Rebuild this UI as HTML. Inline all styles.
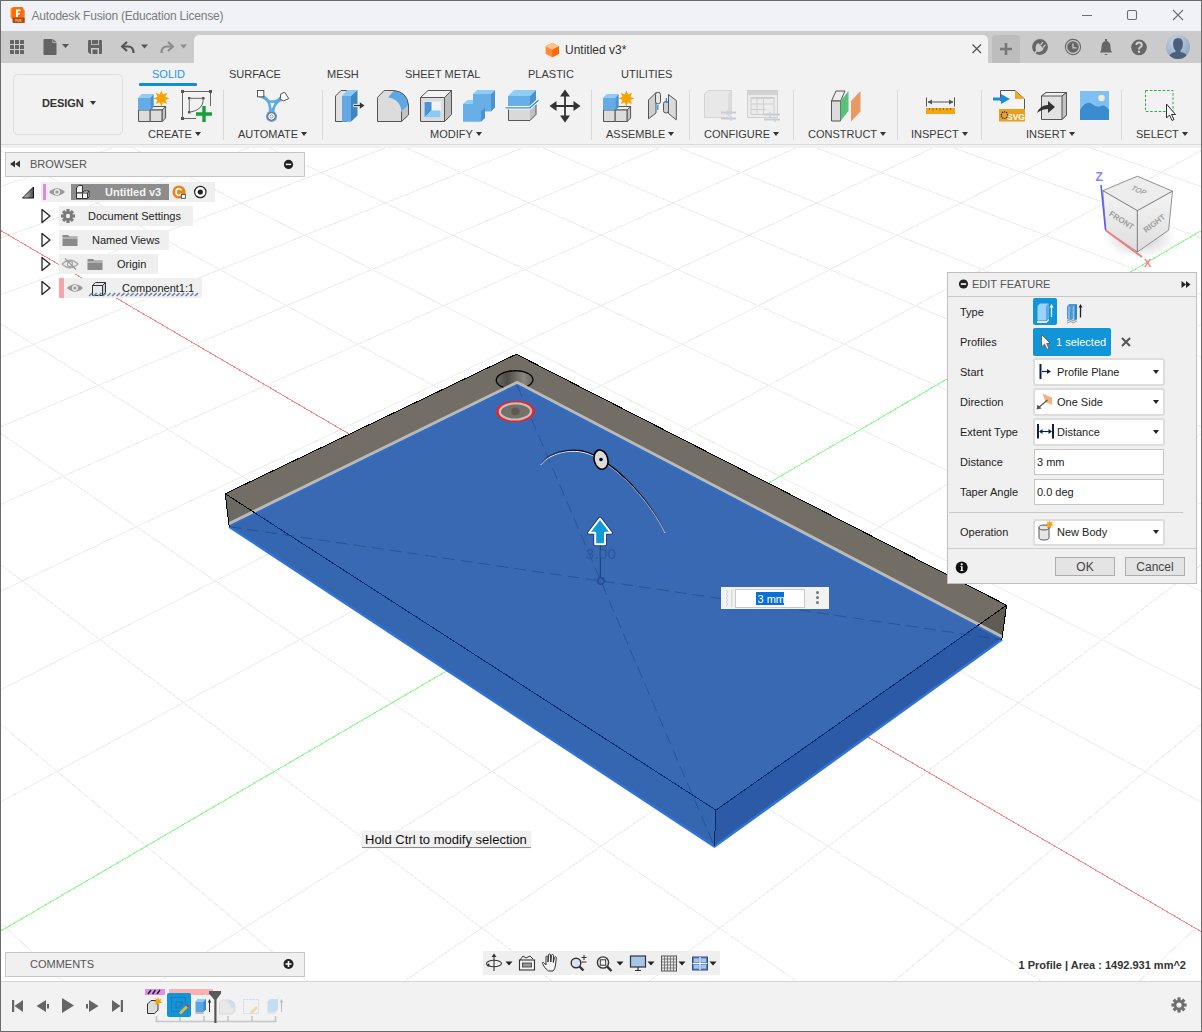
<!DOCTYPE html>
<html><head><meta charset="utf-8">
<style>
*{margin:0;padding:0;box-sizing:border-box}
html,body{width:1202px;height:1032px;overflow:hidden;background:#fff;font-family:"Liberation Sans",sans-serif}
.a{position:absolute}
svg.a{overflow:visible}
.t{position:absolute;white-space:nowrap;line-height:1}
#frame{left:0;top:0;width:1202px;height:1032px;border:1px solid #6b6b6b;z-index:50}
#title{left:0;top:0;width:1202px;height:31px;background:#f0f2f8}
#tabbar{left:0;top:31px;width:1202px;height:32px;background:#cbcbcb}
#doctab{left:194px;top:35px;width:794px;height:28px;background:#f2f2f2;border-radius:5px 5px 0 0}
#plustab{left:992px;top:35px;width:28px;height:28px;background:#bdbdbd;border-radius:4px 4px 0 0}
#ribbon{left:0;top:63px;width:1202px;height:85px;background:#f2f2f2}
#ribline{left:0;top:144px;width:1202px;height:1px;background:#dcdcdc}
.tab{position:absolute;top:68.5px;font-size:11px;color:#3a3a3a;white-space:nowrap;line-height:1}
.grp{position:absolute;top:128.5px;font-size:11px;color:#3a3a3a;white-space:nowrap;line-height:1}
.sep{position:absolute;top:90px;width:1px;height:50px;background:#d9d9d9}
.dd{display:inline-block;width:0;height:0;border-left:3.5px solid transparent;border-right:3.5px solid transparent;border-top:4px solid #333;vertical-align:middle;margin-left:3px;position:relative;top:-1px}
#tl{left:0;top:981px;width:1202px;height:51px;background:#f2f2f2;border-top:1px solid #d4d4d4}
.panelhdr{position:absolute;background:#f0f0f0;border:1px solid #c6c6c6}
.row{position:absolute;height:20px;background:#efefef}
.lbl{position:absolute;font-size:11px;color:#222;white-space:nowrap;line-height:1}
.dlg{left:947px;top:272px;width:250px;height:312px;background:#f0f0f0;border:1px solid #bfbfbf}
.drop{position:absolute;left:1033px;width:131.5px;height:27.5px;background:#fff;border:2px solid #dddddd;border-radius:3px}
.inp{position:absolute;left:1034px;width:130px;height:26px;background:#fff;border:1px solid #c6c6c6}
.btn{position:absolute;height:19px;background:#e4e4e4;border:1px solid #adadad;font-size:12px;color:#333;text-align:center;line-height:17px}
.ddr{position:absolute;width:0;height:0;border-left:3.5px solid transparent;border-right:3.5px solid transparent;border-top:4px solid #222}
</style></head><body>
<div id="title" class="a"></div>
<div id="tabbar" class="a"></div>
<div id="doctab" class="a"></div>
<div id="plustab" class="a"></div>
<div id="ribbon" class="a"></div>
<div id="ribline" class="a"></div>
<!-- ===== title bar ===== -->
<svg class="a" style="left:9px;top:6px" width="17" height="18" viewBox="0 0 17 18">
 <path d="M1.5,3.5 Q1.5,1.5 3.5,1.5 L3.5,13 L1.5,12 Z" fill="#ff8a2a"/>
 <rect x="3" y="1" width="11.5" height="12" rx="1.5" fill="#ff6d00"/>
 <path d="M14.5,3.5 L15.5,4.5 L15.5,17 L14.5,17 Z" fill="#c44d00"/>
 <rect x="3.5" y="11.5" width="12" height="5.5" rx="1" fill="#b4480a"/>
 <path d="M7,3.5 H11.5 V5.2 H8.9 V6.9 H11 V8.5 H8.9 V11 H7 Z" fill="#fff"/>
 <text x="9.5" y="16" font-family="Liberation Sans" font-size="3.2" font-weight="bold" fill="#f3c9a8" text-anchor="middle">FUS</text>
</svg>
<div class="t" style="left:31.5px;top:9.5px;font-size:12px;letter-spacing:-0.2px;color:#7b7b7b">Autodesk Fusion (Education License)</div>
<svg class="a" style="left:1080px;top:8px" width="110" height="15">
 <line x1="2" y1="7.5" x2="12" y2="7.5" stroke="#6e6e6e" stroke-width="1"/>
 <rect x="47.5" y="2.5" width="9" height="9" rx="1.5" fill="none" stroke="#6e6e6e" stroke-width="1.1"/>
 <path d="M93,2 L103,12 M103,2 L93,12" stroke="#6e6e6e" stroke-width="1.1"/>
</svg>

<!-- ===== tab bar ===== -->
<svg class="a" style="left:9px;top:39px" width="16" height="16" viewBox="0 0 16 16">
 <g fill="#646464"><rect x="1" y="1" width="4" height="4" rx=".6"/><rect x="6" y="1" width="4" height="4" rx=".6"/><rect x="11" y="1" width="4" height="4" rx=".6"/>
 <rect x="1" y="6" width="4" height="4" rx=".6"/><rect x="6" y="6" width="4" height="4" rx=".6"/><rect x="11" y="6" width="4" height="4" rx=".6"/>
 <rect x="1" y="11" width="4" height="4" rx=".6"/><rect x="6" y="11" width="4" height="4" rx=".6"/><rect x="11" y="11" width="4" height="4" rx=".6"/></g>
</svg>
<svg class="a" style="left:42px;top:38px" width="30" height="18" viewBox="0 0 30 18">
 <path d="M1.5,2 Q1.5,1 2.5,1 L10.5,1 L14.5,5 L14.5,16 Q14.5,17 13.5,17 L2.5,17 Q1.5,17 1.5,16 Z" fill="#646464"/>
 <path d="M10.5,1 L14.5,5 L10.5,5 Z" fill="#cbcbcb"/><path d="M11.2,1.2 L14.3,4.3 L11.2,4.3Z" fill="#646464"/>
 <path d="M20,6 L27,6 L23.5,10 Z" fill="#555"/>
</svg>
<svg class="a" style="left:87px;top:39px" width="16" height="16" viewBox="0 0 16 16">
 <path d="M1,2 Q1,1 2,1 L14,1 Q15,1 15,2 L15,14 Q15,15 14,15 L3,15 L1,13 Z" fill="#646464"/>
 <rect x="4" y="1" width="8" height="5" fill="#cbcbcb"/><rect x="4.8" y="1" width="6.4" height="4.2" fill="#646464"/>
 <rect x="4" y="9" width="8" height="6" fill="#cbcbcb"/><rect x="5.5" y="10.5" width="5" height="4.5" fill="#646464"/>
</svg>
<svg class="a" style="left:119px;top:38px" width="70" height="18" viewBox="0 0 70 18">
 <path d="M8,4 L3,8.5 L8,13" fill="none" stroke="#555" stroke-width="2.2" stroke-linejoin="round"/>
 <path d="M3.5,8.5 L9,8.5 Q14.5,8.5 14.5,15" fill="none" stroke="#555" stroke-width="2.2"/>
 <path d="M22,6.5 L29,6.5 L25.5,10.5 Z" fill="#555"/>
 <path d="M49,4 L54,8.5 L49,13" fill="none" stroke="#8d8d8d" stroke-width="2.2" stroke-linejoin="round"/>
 <path d="M53.5,8.5 L48,8.5 Q42.5,8.5 42.5,15" fill="none" stroke="#8d8d8d" stroke-width="2.2"/>
 <path d="M61,6.5 L68,6.5 L64.5,10.5 Z" fill="#8d8d8d"/>
</svg>

<svg class="a" style="left:545px;top:42px" width="15" height="16" viewBox="0 0 15 16">
 <path d="M7.3,0.8 L14,4.3 L14,11.8 L7.3,15.3 L0.6,11.8 L0.6,4.3 Z" fill="#ff8a36"/>
 <path d="M7.3,0.8 L14,4.3 L7.3,7.8 L0.6,4.3 Z" fill="#ffc390"/>
 <path d="M7.3,7.8 L14,4.3 L14,11.8 L7.3,15.3 Z" fill="#ff6a00"/>
</svg>
<div class="t" style="left:565px;top:44px;font-size:12px;color:#333">Untitled v3*</div>
<svg class="a" style="left:971px;top:43px" width="12" height="12"><path d="M1.5,1.5 L10,10 M10,1.5 L1.5,10" stroke="#555" stroke-width="1.3"/></svg>
<svg class="a" style="left:997px;top:41px" width="18" height="16"><path d="M9,2 V14 M3,8 H15" stroke="#777" stroke-width="2.6"/></svg>

<svg class="a" style="left:1031px;top:38px" width="160" height="22" viewBox="0 0 160 22">
 <!-- plug/extension icon -->
 <g transform="translate(9,9)">
  <circle r="7.9" fill="#666"/>
  <path d="M-4.2,3.8 Q-5.2,0 -3.5,-2.6 L-2,-4 L0,-2.2 L3.6,1.8 L2.2,3.8 Q-0.5,5.6 -3.2,4.4Z" fill="#cbcbcb"/>
  <path d="M0.5,-2 L3,-4.8 M3,0.5 L5.6,-2.4" stroke="#cbcbcb" stroke-width="1.2"/>
  <path d="M-3.2,4 L-6.5,7.2" stroke="#cbcbcb" stroke-width="1.5"/>
 </g>
 <!-- clock -->
 <g transform="translate(42,9)">
  <circle r="7.6" fill="none" stroke="#666" stroke-width="1.1"/>
  <circle r="5.8" fill="#666"/>
  <path d="M0,-3.5 V0.8 H3.5" fill="none" stroke="#cbcbcb" stroke-width="1.3"/>
 </g>
 <!-- bell -->
 <g transform="translate(75,9)">
  <path d="M-6,5.5 Q-4.5,4 -4.5,0 Q-4.5,-5.5 0,-6 Q4.5,-5.5 4.5,0 Q4.5,4 6,5.5 Z" fill="#666"/>
  <rect x="-1" y="-8" width="2" height="2.5" fill="#666"/>
  <path d="M-2,7 Q0,9 2,7 Z" fill="#666"/>
 </g>
 <!-- help -->
 <g transform="translate(108,9.4)">
  <circle r="7.8" fill="#666"/>
  <path d="M-2.6,-2.3 Q-2.6,-5 0,-5 Q2.8,-5 2.8,-2.5 Q2.8,-0.8 0.8,0.2 Q0,0.7 0,2" fill="none" stroke="#d0d0d0" stroke-width="2"/>
  <circle cx="0" cy="4.3" r="1.2" fill="#d0d0d0"/>
 </g>
</svg>
<svg class="a" style="left:1166px;top:35px" width="24" height="24" viewBox="0 0 24 24">
 <defs><radialGradient id="avg" cx="0.4" cy="0.3" r="0.8"><stop offset="0" stop-color="#c7d3e4"/><stop offset="1" stop-color="#8aa0bf"/></radialGradient>
 <clipPath id="avc"><circle cx="12" cy="12" r="12"/></clipPath></defs>
 <circle cx="12" cy="12" r="12" fill="url(#avg)"/>
 <g clip-path="url(#avc)" fill="#4c5f7c">
  <path d="M12,3 Q17,3 17,9 Q17,13 14.5,15.5 L14.5,17 Q21,18 22,24 L2,24 Q3,18 9.5,17 L9.5,15.5 Q7,13 7,9 Q7,3 12,3 Z"/>
 </g>
</svg>
<!-- ===== ribbon ===== -->
<div class="tab" style="left:152px;color:#1b97dd">SOLID</div>
<div class="a" style="left:139px;top:83px;width:58px;height:3px;background:#0f8fd8;border-radius:1px"></div>
<div class="tab" style="left:229px">SURFACE</div>
<div class="tab" style="left:327px">MESH</div>
<div class="tab" style="left:405px">SHEET METAL</div>
<div class="tab" style="left:528px">PLASTIC</div>
<div class="tab" style="left:621px">UTILITIES</div>

<div class="a" style="left:12.5px;top:73.5px;width:110px;height:61px;border:1.6px solid #dcdcdc;border-radius:5px"></div>
<div class="t" style="left:42px;top:97.5px;font-size:11px;font-weight:bold;color:#333;letter-spacing:-0.1px">DESIGN<span class="dd" style="margin-left:6px"></span></div>

<div class="grp" style="left:148px">CREATE<span class="dd"></span></div>
<div class="grp" style="left:238px">AUTOMATE<span class="dd"></span></div>
<div class="grp" style="left:430px">MODIFY<span class="dd"></span></div>
<div class="grp" style="left:606px">ASSEMBLE<span class="dd"></span></div>
<div class="grp" style="left:704px">CONFIGURE<span class="dd"></span></div>
<div class="grp" style="left:808px">CONSTRUCT<span class="dd"></span></div>
<div class="grp" style="left:911px">INSPECT<span class="dd"></span></div>
<div class="grp" style="left:1026px">INSERT<span class="dd"></span></div>
<div class="grp" style="left:1136px">SELECT<span class="dd"></span></div>
<div class="sep" style="left:223px"></div>
<div class="sep" style="left:322px"></div>
<div class="sep" style="left:591px"></div>
<div class="sep" style="left:689px"></div>
<div class="sep" style="left:793px"></div>
<div class="sep" style="left:897px"></div>
<div class="sep" style="left:981px"></div>
<div class="sep" style="left:1121px"></div>

<svg class="a" style="left:0;top:0" width="1202" height="148" viewBox="0 0 1202 148">
 <defs>
  <linearGradient id="bl" x1="0" y1="0" x2="0" y2="1"><stop offset="0" stop-color="#7fbdf0"/><stop offset="1" stop-color="#4d97d8"/></linearGradient>
 </defs>
 <g transform="translate(-465,0)"><!-- CREATE: new component-ish box with star -->
 <g stroke="#555" stroke-width="1" stroke-linejoin="round">
  <path d="M603.5,110 H615.2 V121.5 H603.5 Z" fill="#dcdcdc"/>
  <path d="M615.2,110 L618.7,106.5 H630.6 L627.2,110 Z" fill="#f0f0f0"/>
  <path d="M615.2,110 H627.2 V121.5 H615.2 Z" fill="#dcdcdc"/>
  <path d="M627.2,110 L630.6,106.5 V118 L627.2,121.5 Z" fill="#c4c4c4"/>
 </g>
 <path d="M603,98 L606.6,94 H618.7 L615.2,98 Z" fill="#8fcdf7"/>
 <rect x="603" y="98" width="12.2" height="12" fill="#65ace6"/>
 <path d="M615.2,98 L618.7,94 V107 L615.2,110 Z" fill="#4a92d0"/>
 <g transform="translate(626.4,98.4)"><path d="M0,-8 L1.7,-3.9 L5.7,-5.7 L3.9,-1.7 L8,0 L3.9,1.7 L5.7,5.7 L1.7,3.9 L0,8 L-1.7,3.9 L-5.7,5.7 L-3.9,1.7 L-8,0 L-3.9,-1.7 L-5.7,-5.7 L-1.7,-3.9 Z" fill="#f5a300"/></g>
 </g>
 <!-- sketch icon -->
 <g fill="#555">
  <rect x="181" y="90" width="3" height="3"/><rect x="209" y="90" width="3" height="3"/><rect x="181" y="117" width="3" height="3"/>
  <rect x="188" y="97" width="2.5" height="2.5"/><rect x="202" y="97" width="2.5" height="2.5"/><rect x="188" y="111" width="2.5" height="2.5"/>
 </g>
 <path d="M182.5,93 V117 M184,91.5 H209 M210.5,93 V106 M184,118.5 H196" stroke="#666" stroke-width="1" fill="none"/>
 <path d="M190.5,98.3 H202 M189.3,100 V111 M190.5,112 Q203,110 203.3,99.5" stroke="#666" stroke-width="1" fill="none"/>
 <path d="M204,106 V122 M196,114 H212" stroke="#17a03a" stroke-width="3.4"/>
 <!-- AUTOMATE -->
 <path d="M260,96 Q266.5,97.5 269.3,103 Q271,108 270.2,113" stroke="#5ea9e6" stroke-width="3" fill="none"/>
 <path d="M281.5,99.5 Q276.5,101 274.3,106 Q272.6,109.5 273,113" stroke="#5ea9e6" stroke-width="3" fill="none"/>
 <path d="M263.5,96 Q266.5,101.5 272,101.8 Q277.5,101.8 280.5,97.5" stroke="#5ea9e6" stroke-width="2.6" fill="none"/>
 <path d="M270.3,102.8 L274.5,103.2 L271.8,108.8Z" fill="#f4f4f4"/>
 <circle cx="271.5" cy="116.4" r="5.6" fill="#5ea9e6"/>
 <circle cx="271.5" cy="116.4" r="3.9" fill="#f8f8f8" stroke="#555" stroke-width="1"/>
 <path d="M271.5,114.6 L273.3,116.4 L271.5,118.2 L269.7,116.4Z" fill="none" stroke="#777" stroke-width=".8"/>
 <rect x="257.5" y="90.5" width="6.3" height="6.3" fill="#fff" stroke="#555" stroke-width="1"/>
 <path d="M284.5,92.2 L288.8,98.6 L283.5,100.9 L280.2,99.2 L280.8,94Z" fill="#fff" stroke="#555" stroke-width="1" stroke-linejoin="round"/>
 <!-- MODIFY: press pull -->
 <path d="M335.5,96 L341,90.5 L346.5,90.5 L346.5,121.5 L335.5,121.5 Z" fill="#e2e2e2" stroke="#555" stroke-width="1"/>
 <rect x="342" y="96" width="9" height="25.8" fill="#63a8e4"/>
 <path d="M342,96 L347.5,90 L357.5,90 L351,96 Z" fill="#8ccaf5"/>
 <path d="M351,96 L357.5,90 L357.5,115.5 L351,121.8 Z" fill="#3d86c6"/>
 <path d="M353.5,105.5 H361" stroke="#fff" stroke-width="3.2"/>
 <path d="M354,105.5 H361" stroke="#333" stroke-width="1.4"/>
 <path d="M364.5,105.5 L359.8,102.2 V108.8 Z" fill="#333"/>
 <!-- fillet -->
 <path d="M377.5,97.5 L384,90.5 L394,90.5 Q407,92 408.5,105 L408.5,115 L401.5,121.5 L377.5,121.5 Z" fill="#dcdcdc"/>
 <path d="M394,90.5 Q407,92 408.5,105 L401.5,111.5 Q400,99 388,97.5 Z" fill="#5fa8e4"/>
 <path d="M401.5,111.5 L408.5,105 L408.5,115 L401.5,121.5 Z" fill="#c2c2c2"/>
 <path d="M377.5,97.5 L384,90.5 L394,90.5 Q407,92 408.5,105 L408.5,115 L401.5,121.5 L377.5,121.5 Z M401.5,121.5 V111.5" fill="none" stroke="#555" stroke-width="1"/>
 <!-- shell -->
 <path d="M420.5,97.5 L428,90.5 L451.5,90.5 L444.5,97.5 Z" fill="#f4f4f4" stroke="#555" stroke-width="1"/>
 <path d="M420.5,97.5 H444.5 V121.5 H420.5 Z" fill="#dcdcdc" stroke="#555" stroke-width="1"/>
 <path d="M444.5,97.5 L451.5,90.5 L451.5,114.5 L444.5,121.5 Z" fill="#bdbdbd" stroke="#555" stroke-width="1"/>
 <rect x="424" y="101.5" width="17" height="16.5" fill="#f3f3f3"/>
 <path d="M424.5,102 H431.5 V110.5 L424.5,117.5 Z" fill="#4a92d6"/>
 <path d="M424.5,117.5 L431.5,110.5 H440.5 V117.5 Z" fill="#8ac8f6"/>
 <!-- combine -->
 <path d="M463,104 H473 V94 H491 V111.5 H481 V121.8 H463 Z" fill="#68afe7"/>
 <path d="M463,104 L467.5,100 H473 V104Z M473,94 L477,90 H495 L491,94Z" fill="#8fcdf7"/>
 <path d="M491,94 L495,90 V107.5 L491,111.5Z M481,111.5 L485,107.5 V118 L481,121.8Z" fill="#4a92d0"/>
 <!-- split -->
 <path d="M508,96 L514,90 H536 L530,96Z" fill="#8fcdf7"/>
 <rect x="508" y="96" width="22" height="10" fill="#68afe7"/>
 <path d="M530,96 L536,90 V100 L530,106Z" fill="#4a92d0"/>
 <path d="M508.5,109.5 H530 V120.5 H508.5 Z" fill="#d9d9d9"/>
 <path d="M530,110 L536,104.5 V114.5 L530,120.5Z" fill="#c0c0c0"/>
 <path d="M508.5,109.5 V120.5 H530 L536,114.5 V104.5" fill="none" stroke="#555" stroke-width="1"/>
 <path d="M505.5,107.8 H530 L538.5,100.2" fill="none" stroke="#fff" stroke-width="3"/>
 <path d="M505.5,107.8 H530 L538.5,100.2" fill="none" stroke="#2a8ee2" stroke-width="1.3"/>
 <!-- move -->
 <g fill="#333" transform="translate(565,106)">
  <path d="M-0.9,-10 H0.9 V10 H-0.9Z M-10,-0.9 H10 V0.9 H-10Z"/>
  <path d="M0,-16.5 L-5,-9.5 L5,-9.5Z M0,16.5 L-5,9.5 L5,9.5Z M-15.5,0 L-8.5,-5 L-8.5,5Z M15.5,0 L8.5,-5 L8.5,5Z"/>
 </g>
 <!-- ASSEMBLE: new component -->
 <g stroke="#555" stroke-width="1" stroke-linejoin="round">
  <path d="M603.5,110 H615.2 V121.5 H603.5 Z" fill="#dcdcdc"/>
  <path d="M615.2,110 L618.7,106.5 H630.6 L627.2,110 Z" fill="#f0f0f0"/>
  <path d="M615.2,110 H627.2 V121.5 H615.2 Z" fill="#dcdcdc"/>
  <path d="M627.2,110 L630.6,106.5 V118 L627.2,121.5 Z" fill="#c4c4c4"/>
 </g>
 <path d="M603,98 L606.6,94 H618.7 L615.2,98 Z" fill="#8fcdf7"/>
 <rect x="603" y="98" width="12.2" height="12" fill="#65ace6"/>
 <path d="M615.2,98 L618.7,94 V107 L615.2,110 Z" fill="#4a92d0"/>
 <g transform="translate(626.4,98.4)"><path d="M0,-8 L1.7,-3.9 L5.7,-5.7 L3.9,-1.7 L8,0 L3.9,1.7 L5.7,5.7 L1.7,3.9 L0,8 L-1.7,3.9 L-5.7,5.7 L-3.9,1.7 L-8,0 L-3.9,-1.7 L-5.7,-5.7 L-1.7,-3.9 Z" fill="#f5a300"/></g>
 <!-- joint -->
 <path d="M648.5,100 L656,92.5 L656,113 L648.5,118.8 Z" fill="#cfcfcf" stroke="#555" stroke-width="1" stroke-linejoin="round"/>
 <rect x="655.5" y="92.3" width="5" height="11.5" rx="2.3" fill="#e6e6e6" stroke="#555" stroke-width="1"/>
 <path d="M668.5,94.5 L676.3,100.5 L676.3,119.8 L668.5,113.5 Z" fill="#dadada" stroke="#555" stroke-width="1" stroke-linejoin="round"/>
 <rect x="663.5" y="101.5" width="5" height="11.5" rx="2.3" fill="#cfcfcf" stroke="#555" stroke-width="1"/>
 <path d="M657.8,105 V110 M666.3,98 V103" stroke="#1f8ae0" stroke-width="1.2"/>
 <!-- CONFIGURE faded -->
 <path d="M704.5,94 L708,90.5 L731.5,90.5 L731.5,114 L728,117.5 L704.5,117.5 Z" fill="#e8e8e8" stroke="#d4d4d4" stroke-width="1"/>
 <path d="M728,94 L731.5,90.5 L731.5,114 L728,117.5Z" fill="#dcdcdc"/>
 <path d="M721,112.5 H736 M721,118.5 H736" stroke="#cbcbcb" stroke-width="2"/>
 <path d="M727,110 V115 M731,116 V121" stroke="#b9d6ef" stroke-width="1.5"/>
 <rect x="747.5" y="90.5" width="30" height="27" fill="#ececec" stroke="#cfcfcf" stroke-width="1"/>
 <rect x="748" y="91" width="29" height="4" fill="#d2d2d2"/>
 <path d="M751,98.5 H774 M751,104 H774 M751,109.5 H766 M757,97 V114 M763.5,97 V114" stroke="#cfcfcf" stroke-width="1"/>
 <rect x="751" y="97.5" width="23" height="17" fill="none" stroke="#cfcfcf" stroke-width="1"/>
 <path d="M764,114.5 H780 M764,119.5 H780" stroke="#cbcbcb" stroke-width="2"/>
 <path d="M770,112 V117 M775,117 V122" stroke="#b9d6ef" stroke-width="1.5"/>
 <!-- CONSTRUCT -->
 <path d="M831.5,101 L836,91 L845,91 L840.5,101 Z" fill="#eee" stroke="#555" stroke-width="1"/>
 <path d="M831.5,101 L840.5,101 L840.5,121 L831.5,121 Z" fill="#dcdcdc" stroke="#555" stroke-width="1"/>
 <path d="M840.5,101 L848.5,91 L848.5,111 L840.5,121 Z" fill="#5cc07a"/>
 <path d="M851,101 L860.5,91 L860.5,111.5 L851,121.5 Z" fill="#e89a63"/>
 <!-- INSPECT -->
 <path d="M926.5,97.5 V106.5 M954.5,97.5 V106.5" stroke="#555" stroke-width="1"/>
 <path d="M928,102 H953" stroke="#555" stroke-width="1"/>
 <path d="M927.5,102 L932,99.5 L932,104.5Z M953.5,102 L949,99.5 L949,104.5Z" fill="#555"/>
 <rect x="926" y="108" width="29" height="6" fill="#f4a716"/>
 <path d="M929.5,108 V110 M933,108 V110.5 M936.5,108 V110 M940,108 V110.5 M943.5,108 V110 M947,108 V110.5 M950.5,108 V110" stroke="#8a5a00" stroke-width=".8"/>
 <!-- INSERT svg -->
 <path d="M1000.5,101 V90.5 L1015,90.5 L1024.5,99 L1024.5,109" fill="#f6f6f6" stroke="#555" stroke-width="1"/>
 <path d="M1015,90.5 L1024.5,99 L1015,99 Z" fill="#f0a92a"/>
 <rect x="999" y="109" width="26" height="12.5" fill="#e8a020"/>
 <text x="1016" y="119.5" font-family="Liberation Sans" font-size="8.5" font-weight="bold" fill="#fff" text-anchor="middle">SVG</text>
 <circle cx="1004.5" cy="115.2" r="3.3" fill="none" stroke="#222" stroke-width="1.2" stroke-dasharray="1.2 .9"/>
 <path d="M993,99 H1003" stroke="#1b8de0" stroke-width="3"/>
 <path d="M1001,94 L1010,99 L1001,104 Z" fill="#1b8de0"/>
 <!-- derive -->
 <path d="M1041.5,96 L1046,92.5 L1066.5,92.5 L1066.5,115 L1062,119.5 L1041.5,119.5 Z" fill="#e2e2e2" stroke="#555" stroke-width="1"/>
 <path d="M1041.5,96 L1046,92.5 L1066.5,92.5 L1062,96 Z" fill="#f2f2f2" stroke="#555" stroke-width="1"/>
 <path d="M1062,96 L1066.5,92.5 L1066.5,115 L1062,119.5 Z" fill="#c3c3c3" stroke="#555" stroke-width="1"/>
 <path d="M1037,113 Q1040,105 1048,105 L1048,101 L1055,107 L1048,113 L1048,109 Q1042,109 1037,113 Z" fill="#333"/>
 <!-- canvas image -->
 <rect x="1080" y="91" width="29" height="29" fill="#7ec0f4"/>
 <path d="M1080,110 Q1086,100 1092,104 Q1097,108 1101,106 Q1105,104 1109,110 V120 H1080 Z" fill="#3b8ccf"/>
 <circle cx="1101.5" cy="98" r="3.2" fill="#f3f0c8"/>
 <!-- SELECT -->
 <rect x="1145.5" y="90.5" width="27.5" height="21" fill="none" stroke="#2aaa4a" stroke-width="1" stroke-dasharray="2.5 1.8"/>
 <path d="M1166.5,104 L1166.5,118 L1169.5,115 L1172,120.5 L1174,119.5 L1171.5,114.5 L1175.5,114.5 Z" fill="#f4f4f4" stroke="#333" stroke-width="1" stroke-linejoin="round"/>
</svg>

<svg width="1202" height="1032" viewBox="0 0 1202 1032" style="position:absolute;left:0;top:0">
<defs><clipPath id="vp"><rect x="1" y="148" width="1200" height="833"/></clipPath><linearGradient id="holeg" x1="0" x2="1"><stop offset="0" stop-color="#6d6a63"/><stop offset="0.3" stop-color="#4e4c47"/><stop offset="0.75" stop-color="#8a8780"/><stop offset="1" stop-color="#6a675f"/></linearGradient></defs>
<g clip-path="url(#vp)">
<path d="M-19.4,146.3L29.0,130.2M-19.5,193.7L163.4,130.1M-19.7,245.7L297.8,130.1M-19.9,302.7L432.3,130.1M-19.0,365.4L566.7,130.1M-19.2,435.2L701.2,130.1M-19.3,513.3L835.7,130.0M-19.5,600.9L970.2,130.0M-19.7,700.1L1104.2,130.3M-20.0,813.2L1229.7,135.2M130.0,1000.0L1229.5,306.0M378.4,999.1L1229.7,414.1M625.4,999.2L1229.9,543.2M872.5,999.4L1229.4,701.0M1119.7,999.5L1229.6,896.4M-19.7,903.4L83.0,999.9M-19.4,707.3L329.0,999.1M-19.9,549.0L576.0,999.2M-19.6,419.4L823.1,999.3M-20.0,310.6L1070.2,999.4M-19.5,139.6L1229.0,817.3M97.6,130.2L1229.6,704.3M232.0,130.1L1229.0,604.6M366.4,130.1L1229.6,517.0M500.8,130.1L1229.1,438.5M635.3,130.1L1229.6,368.7M769.8,130.0L1229.1,305.3M904.3,130.0L1229.6,248.3M1039.6,130.3L1229.1,196.1M1174.2,130.2L1229.6,148.6" stroke="#ededed" stroke-width="1" fill="none" shape-rendering="crispEdges"/>
<path d="M-19.7,218.6L1229.7,948.3" stroke="#ff8080" stroke-width="1" fill="none" shape-rendering="crispEdges"/>
<path d="M-18.8,942.5L1229.9,214.0" stroke="#80ff80" stroke-width="1" fill="none" shape-rendering="crispEdges"/>
<polygon points="225.2,493.7 516.3,354.2 1006.6,605.2 715.9,810.1" fill="#726e65"/>
<polygon points="225.2,493.7 715.9,810.1 714.4,846.4 229.2,526.7" fill="#6b6963"/>
<polygon points="715.9,810.1 1006.6,605.2 1001.8,639.6 714.4,846.4" fill="#5f5c55"/>
<path d="M527.1,386.4L528.8,385.5L530.2,384.5L531.3,383.4L532.1,382.3L532.7,381.1L532.9,379.9L532.8,378.7L532.4,377.5L531.7,376.3L530.7,375.3L529.4,374.3L527.9,373.4L526.1,372.6L524.2,371.9L522.1,371.4L519.9,371.0L517.6,370.8L515.2,370.7L512.8,370.8L510.5,371.0L508.2,371.4L506.0,371.9L504.0,372.6L502.1,373.4L500.5,374.3L499.1,375.3L497.9,376.3L497.1,377.5L496.5,378.7L496.3,379.9L496.3,381.1L496.7,382.3L497.4,383.4L498.3,384.5L499.6,385.5L501.1,386.4L502.9,387.2L504.8,387.9L506.9,388.5L509.2,388.9L511.5,389.1L513.9,389.2L516.4,389.1L518.7,388.9L521.0,388.5L523.2,387.9L525.3,387.2Z" fill="url(#holeg)" stroke="#000" stroke-width="1.3"/>
<polygon points="229.2,525.7 517.1,384.2 1001.8,638.6 714.4,846.4" fill="#3a69b3"/>
<polygon points="229.2,526.7 256.0,513.6 715.9,810.1 714.4,846.4" fill="#3566b0"/>
<polygon points="715.9,810.1 976.6,626.4 1001.8,639.6 714.4,846.4" fill="#2c5aa6"/>
<polyline points="228.7,523.9 517.1,382.4 1002.3,636.8" fill="none" stroke="#bdbab4" stroke-width="3"/>
<polyline points="229.2,526.2 517.1,384.8 1001.8,639.1" fill="none" stroke="#2e6fd2" stroke-width="1.6"/>
<polyline points="229.2,526.7 714.4,846.4 1001.8,639.6" fill="none" stroke="#2f72d8" stroke-width="2.5" stroke-linejoin="round"/>
<polyline points="229.2,526.7 225.2,493.7 516.3,354.2 1006.6,605.2 1001.8,639.6" fill="none" stroke="#000" stroke-width="1" shape-rendering="crispEdges"/>
<polyline points="225.2,493.7 256.0,513.6" fill="none" stroke="#000" stroke-width="1" shape-rendering="crispEdges"/>
<polyline points="1006.6,605.2 976.6,626.4" fill="none" stroke="#000" stroke-width="1" shape-rendering="crispEdges"/>
<polyline points="256.0,513.6 715.9,810.1 976.6,626.4" fill="none" stroke="#062a6e" stroke-width="1" shape-rendering="crispEdges"/>
<polyline points="715.9,810.1 714.4,846.4" fill="none" stroke="#062a6e" stroke-width="1" shape-rendering="crispEdges"/>
<path d="M517.1,385.4L714.4,846.4M229.2,526.7L1001.8,639.6" stroke="#1a3f7a" stroke-width="1" stroke-dasharray="12 6" fill="none" opacity="0.55"/>
<path d="M527.9,418.1L529.5,417.2L530.9,416.1L532.0,415.0L532.8,413.9L533.3,412.6L533.6,411.4L533.5,410.2L533.1,409.0L532.4,407.8L531.4,406.7L530.1,405.7L528.6,404.8L526.9,404.0L525.0,403.4L522.9,402.8L520.7,402.4L518.4,402.2L516.0,402.1L513.7,402.2L511.4,402.4L509.1,402.8L507.0,403.3L504.9,404.0L503.1,404.8L501.5,405.7L500.1,406.7L499.0,407.8L498.1,409.0L497.6,410.2L497.3,411.4L497.4,412.6L497.7,413.9L498.4,415.0L499.4,416.1L500.6,417.2L502.1,418.1L503.9,418.9L505.8,419.6L507.9,420.1L510.1,420.5L512.4,420.8L514.8,420.9L517.2,420.8L519.6,420.5L521.9,420.1L524.0,419.6L526.0,418.9Z" fill="#75726b" stroke="#ff1a1a" stroke-width="2.2"/>
<path d="M526.1,417.1L527.5,416.3L528.7,415.5L529.7,414.5L530.4,413.5L530.8,412.5L531.0,411.4L531.0,410.4L530.6,409.3L530.0,408.3L529.2,407.4L528.1,406.5L526.8,405.7L525.3,405.1L523.6,404.5L521.9,404.0L520.0,403.7L518.0,403.5L516.0,403.4L513.9,403.5L511.9,403.7L510.0,404.0L508.1,404.5L506.4,405.1L504.8,405.7L503.4,406.5L502.2,407.4L501.3,408.3L500.5,409.3L500.1,410.4L499.9,411.4L499.9,412.5L500.2,413.5L500.8,414.5L501.6,415.5L502.7,416.3L504.0,417.1L505.5,417.8L507.1,418.4L509.0,418.9L510.9,419.3L512.9,419.5L514.9,419.5L517.0,419.5L519.0,419.3L521.0,418.9L522.8,418.4L524.6,417.8Z" fill="#74716a" stroke="#c4c1bc" stroke-width="2.2"/>
<ellipse cx="515.4" cy="411.4" rx="4.2" ry="3.8" fill="#5a5852" opacity="0.9"/>
<defs><linearGradient id="arcg" gradientUnits="userSpaceOnUse" x1="540" y1="0" x2="670" y2="0"><stop offset="0" stop-color="#000" stop-opacity="0.3"/><stop offset="0.3" stop-color="#000"/><stop offset="0.7" stop-color="#000"/><stop offset="1" stop-color="#000" stop-opacity="0.15"/></linearGradient></defs>
<path d="M540.7,465 C550,452 580,444 601,460.8 C620,471 650,501 665,533" fill="none" stroke="#fff" stroke-width="1" opacity="0.85"/>
<path d="M540.7,463.8 C550,451 580,443 601,459.6 C620,470 650,500 665,532" fill="none" stroke="url(#arcg)" stroke-width="1.2"/>
<ellipse cx="601" cy="459.6" rx="6.8" ry="9.8" transform="rotate(-15 601 459.6)" fill="#dcdcdc" stroke="#000" stroke-width="1.6"/>
<circle cx="601" cy="459.5" r="1.8" fill="#000"/>
<line x1="600.3" y1="544" x2="600.3" y2="581.0" stroke="#123f86" stroke-width="1"/>
<circle cx="600.8" cy="581.0" r="3.3" fill="#3460a8" stroke="#24498f" stroke-width="1.3"/>
<text x="601" y="558.8" font-family="Liberation Sans" font-size="15" fill="#2f5699" text-anchor="middle" letter-spacing="0.3">3.00</text>
<path d="M600,518.5 L611,532.8 L605,532.8 L605,544.3 L595.2,544.3 L595.2,532.8 L589,532.8 Z" fill="none" stroke="#1b3c7c" stroke-width="3.8" stroke-linejoin="round"/>
<path d="M600,518.5 L611,532.8 L605,532.8 L605,544.3 L595.2,544.3 L595.2,532.8 L589,532.8 Z" fill="#119ad9" stroke="#fff" stroke-width="2" stroke-linejoin="round"/>
</g></svg>
<!-- ===== browser ===== -->
<div class="panelhdr" style="left:5px;top:152px;width:300px;height:25px"></div>
<svg class="a" style="left:9px;top:159px" width="14" height="10"><path d="M1,5 L6,1.5 V8.5Z M6,5 L11,1.5 V8.5Z" fill="#333"/></svg>
<div class="t" style="left:30px;top:159px;font-size:11px;color:#555">BROWSER</div>
<svg class="a" style="left:282px;top:158px" width="12" height="12"><circle cx="6.5" cy="6.4" r="4.6" fill="#222"/><rect x="3.8" y="5.7" width="5.4" height="1.4" fill="#fff"/></svg>

<div class="row" style="left:41px;top:182px;width:174px;height:19.5px"></div>
<svg class="a" style="left:20px;top:184px" width="16" height="16"><defs><linearGradient id="trg" x1="0" y1="0" x2="1" y2="0"><stop offset="0" stop-color="#e0e0e0"/><stop offset="1" stop-color="#4a4a4a"/></linearGradient></defs><path d="M2.5,14 L13.5,3 L13.5,14 Z" fill="url(#trg)" stroke="#111" stroke-width="1" stroke-linejoin="round"/></svg>
<div class="a" style="left:43px;top:184px;width:3px;height:16px;background:#e188e6"></div>
<svg class="a" style="left:48px;top:186px" width="18" height="12"><path d="M1,6 Q9,-1.5 17,6 Q9,13.5 1,6Z" fill="#9a9a9a"/><circle cx="9" cy="6" r="3" fill="#ebebeb"/><circle cx="9" cy="6" r="1.6" fill="#9a9a9a"/></svg>
<div class="a" style="left:71px;top:184px;width:98px;height:16px;background:#8d8d8d"></div>
<svg class="a" style="left:74px;top:184px" width="18" height="16"><g stroke="#333" stroke-width="1" fill="#f2f2f2" stroke-linejoin="round">
 <path d="M2.5,9 V4 L4.5,1.5 H8.5 V9Z"/><path d="M2.5,9 H8.5 V14.5 H2.5Z"/><path d="M8.5,9 L10,7 H15 V13 L13.5,14.5 H8.5Z"/><path d="M13.5,9 L15,7 M8.5,9 H13.5 V14.5"/></g></svg>
<div class="t" style="left:105px;top:187px;font-size:11px;font-weight:bold;color:#f4f4f4">Untitled v3</div>
<svg class="a" style="left:171px;top:184px" width="38" height="16">
 <circle cx="8" cy="8" r="6.6" fill="#e08a1c"/>
 <text x="7.6" y="12" font-family="Liberation Sans" font-size="10" font-weight="bold" fill="#fff" text-anchor="middle">C</text>
 <rect x="10.3" y="10.3" width="4" height="4" fill="#fff" stroke="#333" stroke-width=".8"/>
 <circle cx="29.3" cy="8" r="5.7" fill="#fff" stroke="#222" stroke-width="1.2"/>
 <circle cx="29.3" cy="8" r="2.6" fill="#222"/>
</svg>

<div class="row" style="left:59px;top:206px;width:134px"></div>
<div class="row" style="left:59px;top:230px;width:110px"></div>
<div class="row" style="left:59px;top:254px;width:99px"></div>
<div class="row" style="left:59px;top:278px;width:143px"></div>
<svg class="a" style="left:38px;top:206px" width="16" height="96"><g fill="#fff" stroke="#222" stroke-width="1.3" stroke-linejoin="round">
 <path d="M4,3.5 L12,10 L4,16.5Z"/><path d="M4,27.5 L12,34 L4,40.5Z"/><path d="M4,51.5 L12,58 L4,64.5Z"/><path d="M4,75.5 L12,82 L4,88.5Z"/></g></svg>
<svg class="a" style="left:60px;top:208px" width="16" height="16" viewBox="-8 -8 16 16"><g fill="#7a7a7a">
 <circle r="4.8"/><rect x="-1.6" y="-7" width="3.2" height="3.2"/>
 <g transform="rotate(45)"><rect x="-1.6" y="-7" width="3.2" height="3.2"/></g><g transform="rotate(90)"><rect x="-1.6" y="-7" width="3.2" height="3.2"/></g><g transform="rotate(135)"><rect x="-1.6" y="-7" width="3.2" height="3.2"/></g><g transform="rotate(180)"><rect x="-1.6" y="-7" width="3.2" height="3.2"/></g><g transform="rotate(225)"><rect x="-1.6" y="-7" width="3.2" height="3.2"/></g><g transform="rotate(270)"><rect x="-1.6" y="-7" width="3.2" height="3.2"/></g><g transform="rotate(315)"><rect x="-1.6" y="-7" width="3.2" height="3.2"/></g></g>
 <circle r="2.2" fill="#ebebeb"/></svg>
<div class="t" style="left:88px;top:210.5px;font-size:11px;color:#222">Document Settings</div>
<svg class="a" style="left:61px;top:232px" width="18" height="16"><path d="M1.5,3 H7 L8.5,4.5 H16.5 V14 H1.5Z" fill="#8a8a8a"/><path d="M1.5,6 H16.5" stroke="#ebebeb" stroke-width=".8"/></svg>
<div class="t" style="left:92px;top:234.5px;font-size:11px;color:#222">Named Views</div>
<svg class="a" style="left:61px;top:258px" width="18" height="12"><path d="M1,6 Q9,-1.5 17,6 Q9,13.5 1,6Z" fill="none" stroke="#aaa" stroke-width="1.2"/><circle cx="9" cy="6" r="2.6" fill="none" stroke="#aaa" stroke-width="1.2"/><path d="M4,0.5 L15,11.5" stroke="#999" stroke-width="1.2"/></svg>
<svg class="a" style="left:86px;top:256px" width="18" height="16"><path d="M1.5,3 H7 L8.5,4.5 H16.5 V14 H1.5Z" fill="#8a8a8a"/><path d="M1.5,6 H16.5" stroke="#ebebeb" stroke-width=".8"/></svg>
<div class="t" style="left:117px;top:258.5px;font-size:11px;color:#222">Origin</div>
<div class="a" style="left:59px;top:278px;width:5px;height:20px;background:#f6a3aa"></div>
<svg class="a" style="left:66px;top:282px" width="18" height="12"><path d="M1,6 Q9,-1.5 17,6 Q9,13.5 1,6Z" fill="#9a9a9a"/><circle cx="9" cy="6" r="3" fill="#ebebeb"/><circle cx="9" cy="6" r="1.6" fill="#9a9a9a"/></svg>
<svg class="a" style="left:90px;top:280px" width="18" height="18"><g stroke="#333" stroke-width="1" stroke-linejoin="round">
 <path d="M2.5,5.5 L5.5,2.5 H15.5 V12.5 L12.5,15.5 H2.5Z" fill="#e6e9ee"/><path d="M12.5,5.5 L15.5,2.5 V12.5 L12.5,15.5Z" fill="#c8ccd3"/><path d="M2.5,5.5 H12.5 V15.5" fill="none"/></g></svg>
<div class="t" style="left:122px;top:282.5px;font-size:11px;color:#222">Component1:1</div>
<svg class="a" style="left:88px;top:291px" width="114" height="6"><path d="M1.0,5 L4.2,2.2 M5.6,5 L8.8,2.2 M10.2,5 L13.4,2.2 M14.8,5 L18.0,2.2 M19.4,5 L22.6,2.2 M24.0,5 L27.2,2.2 M28.6,5 L31.8,2.2 M33.2,5 L36.4,2.2 M37.8,5 L41.0,2.2 M42.4,5 L45.6,2.2 M47.0,5 L50.2,2.2 M51.6,5 L54.8,2.2 M56.2,5 L59.4,2.2 M60.8,5 L64.0,2.2 M65.4,5 L68.6,2.2 M70.0,5 L73.2,2.2 M74.6,5 L77.8,2.2 M79.2,5 L82.4,2.2 M83.8,5 L87.0,2.2 M88.4,5 L91.6,2.2 M93.0,5 L96.2,2.2 M97.6,5 L100.8,2.2 M102.2,5 L105.4,2.2 M106.8,5 L110.0,2.2 " stroke="#6f86a8" stroke-width="1.6"/></svg>
<!-- ===== dialog ===== -->
<div class="a dlg"></div>
<div class="a" style="left:948px;top:296px;width:248px;height:1px;background:#c8c8c8"></div>
<svg class="a" style="left:957px;top:278px" width="12" height="12"><circle cx="6.5" cy="6" r="4.6" fill="#222"/><rect x="3.8" y="5.2" width="5.4" height="1.7" fill="#f0f0f0"/></svg>
<div class="t" style="left:972px;top:279px;font-size:11px;color:#555">EDIT FEATURE</div>
<svg class="a" style="left:1180px;top:280px" width="12" height="10"><path d="M1.5,1 L6,4.5 L1.5,8Z M6,1 L10.5,4.5 L6,8Z" fill="#222"/></svg>

<div class="lbl" style="left:960px;top:307px">Type</div>
<div class="lbl" style="left:960px;top:337px">Profiles</div>
<div class="lbl" style="left:960px;top:367px">Start</div>
<div class="lbl" style="left:960px;top:397px">Direction</div>
<div class="lbl" style="left:960px;top:427px">Extent Type</div>
<div class="lbl" style="left:960px;top:457px">Distance</div>
<div class="lbl" style="left:960px;top:487px">Taper Angle</div>
<div class="lbl" style="left:960px;top:527px">Operation</div>

<div class="a" style="left:1033px;top:298px;width:23.5px;height:27px;background:#0f95d8;border-radius:2px"></div>
<svg class="a" style="left:1033px;top:298px" width="60" height="28">
 <path d="M4.5,8 L7,5.5 L15.5,5.5 L15.5,20 L13,22.5 L4.5,22.5Z" fill="#9dd3fa"/>
 <path d="M13,8 L15.5,5.5 L15.5,20 L13,22.5Z" fill="#5fa9e6"/>
 <path d="M4,23 L13.5,23 L16,20.5 L16,22.5 L13.5,25 L4,25Z" fill="#f3e6dc"/>
 <path d="M18.5,19 V8.5" stroke="#fff" stroke-width="1.3"/><path d="M18.5,6 L16.5,9.5 H20.5Z" fill="#fff"/>
 <path d="M34,8.5 L36,6 L44,6 L44,20.5 L42,22.5 L40,21 L38,22.5 L34,21Z" fill="#4d97d8"/>
 <path d="M36,8.5 V21.5 M40.5,8.5 V21" stroke="#8fc6f2" stroke-width="1.4"/>
 <path d="M42,8.5 L44,6 V20.5 L42,22.5Z" fill="#3b7fc0"/>
 <path d="M34,23 L38,21.5 L40,23 L44,21 M34,25 L38,23.5 L40,25 L44,23" stroke="#999" stroke-width="1" fill="none"/>
 <path d="M47.5,19.5 V8.5" stroke="#222" stroke-width="1.3"/><path d="M47.5,6 L45.5,9.5 H49.5Z" fill="#222"/>
</svg>

<div class="a" style="left:1033px;top:328px;width:77.5px;height:27.5px;background:#0f95d8;border-radius:2px"></div>
<svg class="a" style="left:1040px;top:333px" width="12" height="18"><path d="M1.5,1.5 L1.5,14 L4.5,11.2 L7,16.5 L9,15.5 L6.8,10.5 L10.5,10.5Z" fill="#f4f4f4" stroke="#666" stroke-width="1" stroke-linejoin="round"/></svg>
<div class="t" style="left:1056px;top:336.5px;font-size:11px;color:#fff">1 selected</div>
<svg class="a" style="left:1120px;top:336px" width="12" height="12"><path d="M2,2 L10,10 M10,2 L2,10" stroke="#555" stroke-width="2"/></svg>

<div class="drop" style="top:358px"></div>
<div class="drop" style="top:388px"></div>
<div class="drop" style="top:418px"></div>
<div class="inp" style="top:449px"></div>
<div class="inp" style="top:479px"></div>
<div class="a" style="left:949px;top:512px;width:234px;height:1px;background:#c8c8c8"></div>
<div class="drop" style="top:519px;height:26.5px"></div>
<div class="a" style="left:948px;top:548px;width:248px;height:1px;background:#cdcdcd"></div>

<svg class="a" style="left:1033px;top:358px" width="132" height="190">
 <!-- start icon -->
 <path d="M7.5,6 V21" stroke="#0e1f4d" stroke-width="2"/>
 <path d="M9,13.5 H16" stroke="#0e1f4d" stroke-width="1.2"/><path d="M18,13.5 L14,11 V16Z" fill="#0e1f4d"/>
 <!-- direction -->
 <path d="M9.5,35.5 L19,39.5 L19,47 L12.5,44Z" fill="#f4b183"/>
 <path d="M14.5,42 L4.5,50.5" stroke="#555" stroke-width="1.2"/><path d="M3.5,51.5 L4.5,46.5 L8.5,50.5Z" fill="#555"/>
 <!-- extent -->
 <path d="M5,66 V80.5 M20,66 V80.5" stroke="#0e1f4d" stroke-width="2"/>
 <path d="M7,73.5 H18" stroke="#0e1f4d" stroke-width="1.1"/><path d="M6,73.5 L9.5,71 V76Z M19,73.5 L15.5,71 V76Z" fill="#0e1f4d"/>
 <!-- new body -->
 <path d="M6,169.5 Q6,167 11,167 Q16,167 16,169.5 V179.5 Q16,182 11,182 Q6,182 6,179.5Z" fill="#e6e6e6" stroke="#555" stroke-width="1"/>
 <path d="M6,169.5 Q6,172 11,172 Q16,172 16,169.5" fill="none" stroke="#555" stroke-width="1"/>
 <g transform="translate(16.5,166.5)"><path d="M0,-4.5 L1,-1.8 L3.8,-3.2 L2.2,-0.5 L4.6,0.6 L1.6,1.4 L1.6,4.5 L-0.2,2 L-2.6,3.8 L-1.9,0.9 L-4.5,0 L-1.8,-1 L-3,-3.6 L-0.6,-2Z" fill="#f5a50f"/></g>
</svg>
<div class="t" style="left:1057px;top:367px;font-size:11px;color:#222">Profile Plane</div>
<div class="t" style="left:1057px;top:397px;font-size:11px;color:#222">One Side</div>
<div class="t" style="left:1057px;top:427px;font-size:11px;color:#222">Distance</div>
<div class="t" style="left:1037px;top:457px;font-size:11px;color:#222">3 mm</div>
<div class="t" style="left:1037px;top:487px;font-size:11px;color:#222">0.0 deg</div>
<div class="t" style="left:1057px;top:527px;font-size:11px;color:#222">New Body</div>
<div class="ddr" style="left:1152.5px;top:370px"></div>
<div class="ddr" style="left:1152.5px;top:400px"></div>
<div class="ddr" style="left:1152.5px;top:430px"></div>
<div class="ddr" style="left:1152.5px;top:530px"></div>

<svg class="a" style="left:955px;top:560px" width="14" height="14"><circle cx="6.7" cy="7.4" r="6" fill="#111"/><circle cx="6.7" cy="4.3" r="1.1" fill="#fff"/><path d="M5.3,6.3 H7.6 V10.2 H8.4 V11 H5.3 V10.2 H6.1 V7.1 H5.3Z" fill="#fff"/></svg>
<div class="btn" style="left:1055px;top:557px;width:60px;color:#444;line-height:18px">OK</div>
<div class="btn" style="left:1125px;top:557px;width:60px;color:#444;line-height:18px">Cancel</div>
<!-- ===== comments ===== -->
<div class="panelhdr" style="left:5px;top:952px;width:300px;height:25px"></div>
<div class="t" style="left:30px;top:959px;font-size:11px;color:#555">COMMENTS</div>
<svg class="a" style="left:282px;top:958px" width="12" height="12"><circle cx="6.5" cy="6" r="5" fill="#222"/><path d="M3.5,6 H9.5 M6.5,3 V9" stroke="#fff" stroke-width="1.6"/></svg>

<!-- ===== nav bar ===== -->
<div class="a" style="left:483px;top:951px;width:237px;height:24px;background:#efefef"></div>
<svg class="a" style="left:483px;top:951px" width="237" height="24" viewBox="0 0 237 24">
 <g fill="none" stroke="#333" stroke-width="1.1">
  <ellipse cx="11" cy="12.5" rx="7.5" ry="3.2"/>
  <path d="M11,4 V20"/>
 </g>
 <path d="M11,2.5 L8.5,6 H13.5Z" fill="#333"/><path d="M3.5,15 L6,12 L6.8,15.8Z" fill="#333"/>
 <path d="M22.5,10.5 L29.5,10.5 L26,14.5Z" fill="#222"/>
 <!-- look at -->
 <rect x="36.5" y="9" width="15" height="10" fill="#f4f4f4" stroke="#333" stroke-width="1.1"/>
 <rect x="39.5" y="12" width="9" height="4" fill="#9a9a9a" stroke="#333" stroke-width=".8"/>
 <path d="M37,9 L40,5 L43,7 L47,5 L50,8" fill="none" stroke="#333" stroke-width="1"/>
 <!-- pan hand -->
 <path d="M65.5,20 Q61,17 59.5,12.5 Q59,11 60.5,11.5 L63,14 L63,6 Q63,5 64,5 Q65,5 65,6 L65,11 L65.5,4 Q65.5,3 66.5,3 Q67.5,3 67.5,4 L67.8,11 L68.5,4.5 Q68.5,3.5 69.5,3.5 Q70.5,3.5 70.5,4.5 L70.3,11.5 L71.5,6.5 Q71.8,5.5 72.7,5.8 Q73.5,6 73.3,7 L72.5,14 Q72,18.5 70,20Z" fill="#f4f4f4" stroke="#333" stroke-width="1"/>
 <!-- zoom + -->
 <circle cx="93" cy="12" r="4.8" fill="#d8e4ee" stroke="#333" stroke-width="1.4"/>
 <path d="M96.5,15.5 L100.5,19.5" stroke="#333" stroke-width="2.4"/>
 <path d="M101,4 V9 M98.5,6.5 H103.5 M98.5,11 H103.5" stroke="#333" stroke-width="1"/>
 <!-- zoom window -->
 <circle cx="120" cy="11.5" r="5.6" fill="#f4f4f4" stroke="#333" stroke-width="1.4"/>
 <rect x="117.3" y="8.8" width="5.4" height="5.4" fill="none" stroke="#333" stroke-width="1"/>
 <path d="M124.2,15.7 L128.5,20" stroke="#333" stroke-width="2.4"/>
 <path d="M133.5,10.5 L140.5,10.5 L137,14.5Z" fill="#222"/>
 <!-- display -->
 <rect x="147.5" y="5" width="15" height="11" fill="#a6c6ea" stroke="#333" stroke-width="1.2"/>
 <path d="M152,19.5 H158 M155,16 V19" stroke="#333" stroke-width="1.2"/>
 <path d="M164.5,10.5 L171.5,10.5 L168,14.5Z" fill="#222"/>
 <!-- grid -->
 <rect x="178.5" y="5" width="15" height="15" fill="#e8e8e8" stroke="#555" stroke-width="1"/>
 <path d="M181.5,5 V20 M184.5,5 V20 M187.5,5 V20 M190.5,5 V20 M178.5,8 H193.5 M178.5,11 H193.5 M178.5,14 H193.5 M178.5,17 H193.5" stroke="#666" stroke-width=".8"/>
 <path d="M195.5,10.5 L202.5,10.5 L199,14.5Z" fill="#222"/>
 <!-- viewports -->
 <rect x="209.5" y="6" width="15" height="13" fill="#5884c8" stroke="#2e4f86" stroke-width="1"/>
 <path d="M217,6 V19 M209.5,12.5 H224.5" stroke="#fff" stroke-width="1.2"/>
 <rect x="211" y="7.5" width="4.8" height="3.8" fill="#a9c5ec"/><rect x="218.2" y="7.5" width="4.8" height="3.8" fill="#a9c5ec"/><rect x="211" y="13.7" width="4.8" height="3.8" fill="#a9c5ec"/><rect x="218.2" y="13.7" width="4.8" height="3.8" fill="#a9c5ec"/>
 <path d="M226.5,10.5 L233.5,10.5 L230,14.5Z" fill="#222"/>
</svg>
<div class="t" style="left:1018.5px;top:959.5px;font-size:11px;font-weight:bold;color:#333">1 Profile | Area : 1492.931 mm^2</div>

<!-- ===== tooltip ===== -->
<div class="a" style="left:361.5px;top:830.5px;width:169px;height:17px;background:#f0f0f0;border-bottom:1px solid #8a8a8a;box-shadow:0 0 1px #ddd"></div>
<div class="t" style="left:365px;top:833px;font-size:13px;color:#111">Hold Ctrl to modify selection</div>

<!-- ===== 3mm input ===== -->
<div class="a" style="left:721px;top:587px;width:108px;height:22px;background:#f2f2f2"></div>
<svg class="a" style="left:721px;top:587px" width="108" height="22">
 <path d="M5,3 L7,5 L5,7 L7,9 L5,11 L7,13 L5,15 L7,17 L5,19" fill="none" stroke="#c8c8c8" stroke-width=".8"/>
 <rect x="10" y="2" width="1.5" height="18" fill="#dcdcdc"/>
 <circle cx="96.5" cy="5.5" r="1.5" fill="#777"/><circle cx="96.5" cy="10.5" r="1.5" fill="#777"/><circle cx="96.5" cy="15.5" r="1.5" fill="#777"/>
</svg>
<div class="a" style="left:735px;top:588.5px;width:70px;height:19px;background:#fff;border:1px solid #c9c9c9"></div>
<div class="a" style="left:756px;top:592px;width:28px;height:13px;background:#0a6fd6"></div>
<div class="t" style="left:757.5px;top:593.5px;font-size:11px;color:#fff">3 mm</div>

<!-- ===== timeline ===== -->
<div id="tl" class="a"></div>
<svg class="a" style="left:0;top:981px" width="300" height="51" viewBox="0 981 300 51">
 <g fill="#666">
  <rect x="12" y="1000" width="2.2" height="12"/><path d="M23,1000 L14.5,1006 L23,1012Z"/>
  <path d="M46,1000 L36.5,1006 L46,1012Z"/><rect x="47" y="1004" width="2" height="4.5"/>
  <path d="M62,998 L74,1005.5 L62,1013Z"/>
  <rect x="86" y="1004" width="2" height="4.5"/><path d="M89,1000 L98.5,1006 L89,1012Z"/>
  <path d="M112,1000 L120.5,1006 L112,1012Z"/><rect x="120.8" y="1000" width="2.2" height="12"/>
 </g>
 <rect x="145" y="989" width="20" height="6" fill="#df8fe8"/>
 <path d="M148,994 L151,990 M152.5,994 L155.5,990 M157,994 L160,990" stroke="#222" stroke-width="1.5"/>
 <rect x="169" y="989" width="44" height="6" fill="#fbb1b1"/>
 <path d="M156.5,1016 V1022 M180,1016 V1022 M204,1016 V1022 M228,1016 V1022 M252,1016 V1022 M275.5,1016 V1022 M155.5,1021.5 H276.5" stroke="#c6c6c6" stroke-width="1.6" fill="none"/>
 <!-- icon1 -->
 <path d="M147.5,1004 L151,1000.5 L158,1000.5 L158,1010 L154.5,1013.5 L147.5,1013.5Z" fill="#dcdcdc" stroke="#333" stroke-width="1"/>
 <g transform="translate(158,1001.5)"><path d="M0,-4.5 L1,-1.8 L4,-2.9 L2.2,-0.4 L4.3,1.6 L1.3,1.6 L1.2,4.5 L-0.4,2 L-2.9,3.9 L-2.1,1 L-4.5,0 L-1.9,-1.2 L-3.2,-3.6 L-0.8,-2Z" fill="#f5a50f"/></g>
 <!-- icon2 selected -->
 <rect x="167" y="993" width="24" height="24" rx="2" fill="#0f95d8"/>
 <rect x="171.5" y="997.5" width="14" height="14" fill="none" stroke="#2a6ea8" stroke-width="1" stroke-dasharray="2 1"/>
 <path d="M176,1002 H183 M176,1002 V1008 M176,1008 Q182,1008 182.5,1002" fill="none" stroke="#2a6ea8" stroke-width="1"/>
 <path d="M179,1012.5 L186,1005.5 L188,1007.5 L181,1014.5Z" fill="#f0b43a"/><path d="M186,1005.5 L187.3,1004.2 L189.3,1006.2 L188,1007.5Z" fill="#e03030"/>
 <!-- icon3 extrude -->
 <path d="M195.5,1002 L198,999 L206,999 L206,1009.5 L203.5,1012Z" fill="#3d86c6"/>
 <rect x="195.5" y="1002" width="8" height="10" fill="#5aa5e3"/><path d="M195.5,1002 L198,999 L206,999 L203.5,1002Z" fill="#8ccaf5"/>
 <rect x="195.5" y="1012" width="8" height="2" fill="#bbb"/>
 <path d="M209.5,1012 V1001" stroke="#333" stroke-width="1"/><path d="M209.5,999 L207.8,1002.5 H211.2Z" fill="#333"/>
 <!-- faded -->
 <path d="M219.5,1003 L222,1000 L229,1000 Q235,1001 235,1007 L235,1011 L232,1014 L219.5,1014Z" fill="#e8e8e8" stroke="#d8d8d8" stroke-width="1"/>
 <path d="M229,1000 Q235,1001 235,1007 L231.5,1008 Q231,1003 227,1002.5Z" fill="#c9def0"/>
 <rect x="243.5" y="999.5" width="15" height="14" fill="none" stroke="#c9d9ea" stroke-width="1" stroke-dasharray="2 1"/>
 <path d="M250,1012 L256,1006 L258,1008 L252,1014Z" fill="#f3d7a8"/>
 <path d="M267.5,1002 L270,999 L278,999 L278,1009.5 L275.5,1012 L267.5,1012Z" fill="#c5ddf2"/>
 <rect x="267.5" y="1012" width="8" height="2" fill="#e4e4e4"/>
 <path d="M281.5,1012 V1001" stroke="#bbb" stroke-width="1"/><path d="M281.5,999 L279.8,1002.5 H283.2Z" fill="#bbb"/>
 <!-- marker -->
 <path d="M209,991 H221 V993.5 L216.5,999.5 H214 L209,993.5Z" fill="#5a5a5a"/>
 <rect x="214.3" y="999" width="2.2" height="24" fill="#555"/>
</svg>
<svg class="a" style="left:1170px;top:996px" width="18" height="18" viewBox="-9 -9 18 18"><g fill="#6f6f6f">
 <circle r="5.3"/><rect x="-1.6" y="-7.6" width="3.2" height="3.4"/>
 <g transform="rotate(45)"><rect x="-1.6" y="-7.6" width="3.2" height="3.4"/></g><g transform="rotate(90)"><rect x="-1.6" y="-7.6" width="3.2" height="3.4"/></g><g transform="rotate(135)"><rect x="-1.6" y="-7.6" width="3.2" height="3.4"/></g><g transform="rotate(180)"><rect x="-1.6" y="-7.6" width="3.2" height="3.4"/></g><g transform="rotate(225)"><rect x="-1.6" y="-7.6" width="3.2" height="3.4"/></g><g transform="rotate(270)"><rect x="-1.6" y="-7.6" width="3.2" height="3.4"/></g><g transform="rotate(315)"><rect x="-1.6" y="-7.6" width="3.2" height="3.4"/></g></g>
 <circle r="2.6" fill="#f2f2f2"/></svg>

<!-- ===== nav cube ===== -->
<svg class="a" style="left:1080px;top:160px" width="110" height="115" viewBox="1080 160 110 115">
 <defs>
  <radialGradient id="shd" cx="0.5" cy="0.5" r="0.5"><stop offset="0" stop-color="#000" stop-opacity="0.22"/><stop offset="1" stop-color="#000" stop-opacity="0"/></radialGradient>
  <linearGradient id="cf1" x1="0" y1="0" x2="0" y2="1"><stop offset="0" stop-color="#f4f4f4"/><stop offset="1" stop-color="#dedede"/></linearGradient>
 </defs>
 <ellipse cx="1140" cy="238" rx="36" ry="20" fill="url(#shd)"/>
 <path d="M1137.4,176.2 L1172.5,191.2 L1137.4,210.7 L1102.8,190.7Z" fill="#ededed" stroke="#777" stroke-width=".8" stroke-linejoin="round"/>
 <path d="M1102.8,190.7 L1137.4,210.7 L1137.4,252 L1105.6,230.2Z" fill="url(#cf1)" stroke="#777" stroke-width=".8" stroke-linejoin="round"/>
 <path d="M1137.4,210.7 L1172.5,191.2 L1168.6,230.2 L1137.4,252Z" fill="url(#cf1)" stroke="#777" stroke-width=".8" stroke-linejoin="round"/>
 <text transform="translate(1130,189.5) rotate(22) skewX(-20)" font-family="Liberation Sans" font-size="7.5" fill="#a8a8a8" font-weight="bold">TOP</text>
 <text transform="translate(1108.5,215) rotate(33) skewY(0)" font-family="Liberation Sans" font-size="8" fill="#9c9c9c" font-weight="bold">FRONT</text>
 <text transform="translate(1146,233) rotate(-37)" font-family="Liberation Sans" font-size="8" fill="#9c9c9c" font-weight="bold">RIGHT</text>
 <path d="M1105.6,230.2 L1101,185" stroke="#5b5bff" stroke-width="1.6"/>
 <path d="M1105.6,230.2 L1142,257" stroke="#f08080" stroke-width="2"/>
 <text x="1095.5" y="181" font-family="Liberation Sans" font-size="12" fill="#8585ff" font-weight="bold">Z</text>
 <text x="1144" y="267" font-family="Liberation Sans" font-size="11" fill="#f58585" font-weight="bold">X</text>
</svg>
<div id="frame" class="a" style="pointer-events:none"></div>
</body></html>
